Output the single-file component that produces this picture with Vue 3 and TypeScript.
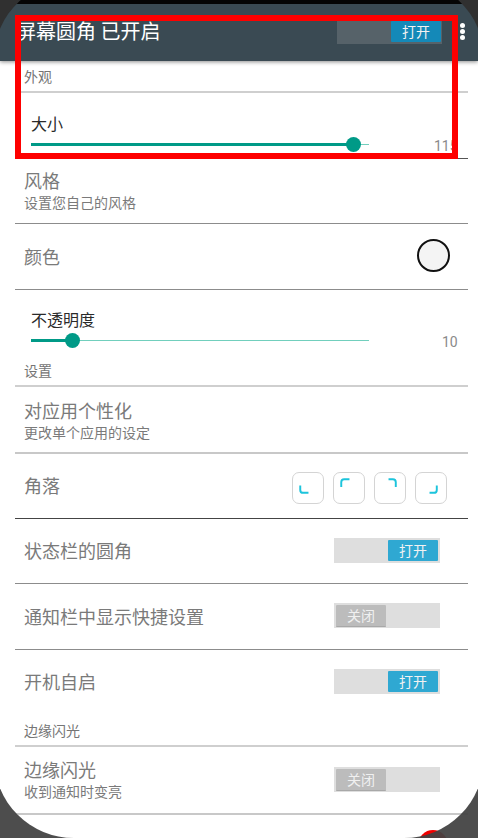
<script setup lang="ts">
const corners = [
  'M7.5 13v4.5a3 3 0 0 0 3 3h5.5',
  'M7.5 14.5V9.5a3 3 0 0 1 3-3h5.5',
  'M14 6.5h4.5a3 3 0 0 1 3 3v5',
  'M14 20.5h4.5a3 3 0 0 0 3-3v-4.5',
]
</script>

<template>
  <div class="screen">
    <div class="strip"></div>
    <header class="bar">
      <span class="bar-title">屏幕圆角 已开启</span>
      <span class="switch bar-switch"><span class="knob on">打开</span></span>
      <span class="dots"><i></i><i></i><i></i></span>
    </header>

    <div class="section first">外观</div>
    <div class="slider-row big">
      <div class="slider-label">大小</div>
      <div class="slider-line">
        <div class="track"><div class="fill" style="width: 322px"></div><div class="thumb" style="left: 315px"></div></div>
        <span class="val clipped">115</span>
      </div>
    </div>
    <div class="rule dark"></div>

    <div class="row h64">
      <div><div class="title">风格</div><div class="sub">设置您自己的风格</div></div>
    </div>
    <div class="rule mid"></div>
    <div class="row h65">
      <div class="title">颜色</div>
      <span class="swatch"></span>
    </div>
    <div class="rule mid"></div>

    <div class="slider-row opacity">
      <div class="slider-label">不透明度</div>
      <div class="slider-line">
        <div class="track"><div class="fill" style="width: 42px"></div><div class="thumb" style="left: 34px"></div></div>
        <span class="val">10</span>
      </div>
    </div>
    <div class="section">设置</div>
    <div class="row h65 nudge">
      <div><div class="title">对应用个性化</div><div class="sub">更改单个应用的设定</div></div>
    </div>
    <div class="rule light"></div>
    <div class="row h64">
      <div class="title">角落</div>
      <div class="corners">
        <span v-for="d in corners" :key="d" class="corner">
          <svg viewBox="0 0 30 30" width="29" height="29"><path :d="d" /></svg>
        </span>
      </div>
    </div>
    <div class="rule darkest"></div>
    <div class="row h64">
      <div class="title">状态栏的圆角</div>
      <span class="switch"><span class="knob on">打开</span></span>
    </div>
    <div class="rule mid"></div>
    <div class="row h65">
      <div class="title">通知栏中显示快捷设置</div>
      <span class="switch"><span class="knob off">关闭</span></span>
    </div>
    <div class="rule mid"></div>
    <div class="row h66 lift">
      <div class="title">开机自启</div>
      <span class="switch"><span class="knob on">打开</span></span>
    </div>
    <div class="section">边缘闪光</div>
    <div class="row h66">
      <div><div class="title">边缘闪光</div><div class="sub">收到通知时变亮</div></div>
      <span class="switch"><span class="knob off">关闭</span></span>
    </div>
    <div class="rule light"></div>

    <span class="fab"></span>
    <div class="mask mask-top"><div class="mask-ring"></div></div>
    <div class="mask mask-bottom"><div class="mask-ring"></div></div>
    <div class="marker"></div>
  </div>
</template>

<style>
html, body { margin: 0; background: #fff; }
</style>

<style scoped>
.screen {
  position: relative;
  width: 478px;
  height: 838px;
  overflow: hidden;
  background: #fff;
  font-family: "Noto Sans CJK SC", Roboto, sans-serif;
}
.strip {
  height: 4px;
  background: #060606;
}
.bar {
  box-sizing: border-box;
  height: 57px;
  display: flex;
  align-items: flex-start;
  padding-left: 16px;
  background: #3a4a53;
  box-shadow: 0 1px 4px rgba(0, 0, 0, .45);
  position: relative;
}
.bar-title {
  flex: 1;
  margin-top: 11px;
  font-size: 20px;
  line-height: 32px;
  color: #fff;
  white-space: nowrap;
}
.dots {
  width: 32px;
  height: 17px;
  margin: 19px 0 0 4px;
  display: flex;
  flex-direction: column;
  align-items: center;
  justify-content: space-between;
}
.dots i {
  width: 5px;
  height: 5px;
  border-radius: 50%;
  background: #fff;
}
.section {
  box-sizing: border-box;
  margin: 0 10px 0 15px;
  padding-left: 9px;
  height: 31px;
  line-height: 28px;
  font-size: 14px;
  color: #757575;
  border-bottom: 2px solid #cfcfcf;
}
.section.first {
  height: 32px;
  line-height: 30px;
}
.slider-row {
  box-sizing: border-box;
  padding: 18px 0 0 31px;
  height: 66px;
}
.slider-row.big {
  padding-top: 19px;
  height: 65px;
}
.slider-label {
  font-size: 16px;
  line-height: 22px;
  color: #2a2a2a;
}
.slider-line {
  display: flex;
  align-items: center;
  height: 20px;
}
.track {
  position: relative;
  width: 338px;
  height: 1px;
  background: #71cfbd;
}
.fill {
  position: absolute;
  left: 0;
  top: -1px;
  height: 3px;
  background: #009a87;
}
.thumb {
  position: absolute;
  top: -7px;
  width: 15px;
  height: 15px;
  border-radius: 50%;
  background: #009a87;
}
.val {
  margin-left: 73px;
  padding-top: 3px;
  font-family: Roboto, sans-serif;
  font-size: 14px;
  color: #8a8a8a;
  white-space: nowrap;
}
.val.clipped { margin-left: 65px; }
.rule { height: 1px; margin: 0 10px 0 15px; }
.rule.dark { background: #555; }
.rule.mid { background: #8c8c8c; }
.rule.light { height: 2px; background: #c8c8c8; }
.rule.darkest { background: #444; }
.row {
  box-sizing: border-box;
  display: flex;
  align-items: center;
  justify-content: space-between;
  margin: 0 10px 0 15px;
  padding: 0 28px 2px 9px;
}
.h64 { height: 64px; }
.h65 { height: 65px; }
.h66 { height: 66px; }
.nudge { padding-bottom: 0; }
.lift { padding-bottom: 4px; }
.title {
  font-size: 18px;
  line-height: 24px;
  color: #7a7a7a;
}
.sub {
  font-size: 14px;
  line-height: 20px;
  color: #7a7a7a;
}
.swatch {
  box-sizing: border-box;
  width: 33px;
  height: 33px;
  margin-right: -10px;
  border: 2px solid #111;
  border-radius: 50%;
  background: #f4f4f4;
}
.switch {
  box-sizing: border-box;
  display: flex;
  width: 106px;
  height: 25px;
  padding: 2px;
  background: #dedede;
}
.bar-switch {
  width: 105px;
  height: 23px;
  margin-top: 17px;
  padding: 0 1px 2px 0;
  background: #566269;
}
.knob {
  width: 50px;
  height: 21px;
  font-size: 14px;
  line-height: 20px;
  text-align: center;
  border-radius: 1px;
}
.knob.on {
  margin-left: auto;
  background: #2fa8d2;
  color: #f2f2f2;
}
.bar-switch .knob.on { background: #1489b8; }
.knob.off {
  background: #bcbcbc;
  color: #f0f0f0;
  border-bottom: 1px solid #a8a8a8;
}
.corners {
  display: flex;
  gap: 9px;
  margin: 6px -7px 0 0;
}
.corner {
  box-sizing: border-box;
  width: 32px;
  height: 32px;
  border: 1.5px solid #d4d4d4;
  border-radius: 7px;
}
.corner svg { display: block; }
.corner path {
  fill: none;
  stroke: #1cc4dc;
  stroke-width: 2;
}
.fab {
  position: absolute;
  left: 418px;
  top: 830px;
  width: 30px;
  height: 30px;
  border-radius: 50%;
  background: #f00000;
}
.mask {
  position: absolute;
  left: 0;
  width: 478px;
  height: 120px;
  overflow: hidden;
}
.mask-top { top: 0; }
.mask-bottom { bottom: 0; }
.mask-ring {
  position: absolute;
  left: -6px;
  width: 490px;
  height: 860px;
}
.mask-top .mask-ring {
  top: -22px;
  border-radius: 86px 83px 0 0 / 80px 80px 0 0;
  box-shadow: 0 0 0 140px #303030;
}
.mask-bottom .mask-ring {
  bottom: 0;
  border-radius: 0 0 80px 80px;
  box-shadow: 0 0 0 140px rgba(66, 66, 66, .94);
}
.marker {
  position: absolute;
  left: 15px;
  top: 15px;
  box-sizing: border-box;
  width: 443px;
  height: 144px;
  border: 6px solid #fe0000;
}
</style>
